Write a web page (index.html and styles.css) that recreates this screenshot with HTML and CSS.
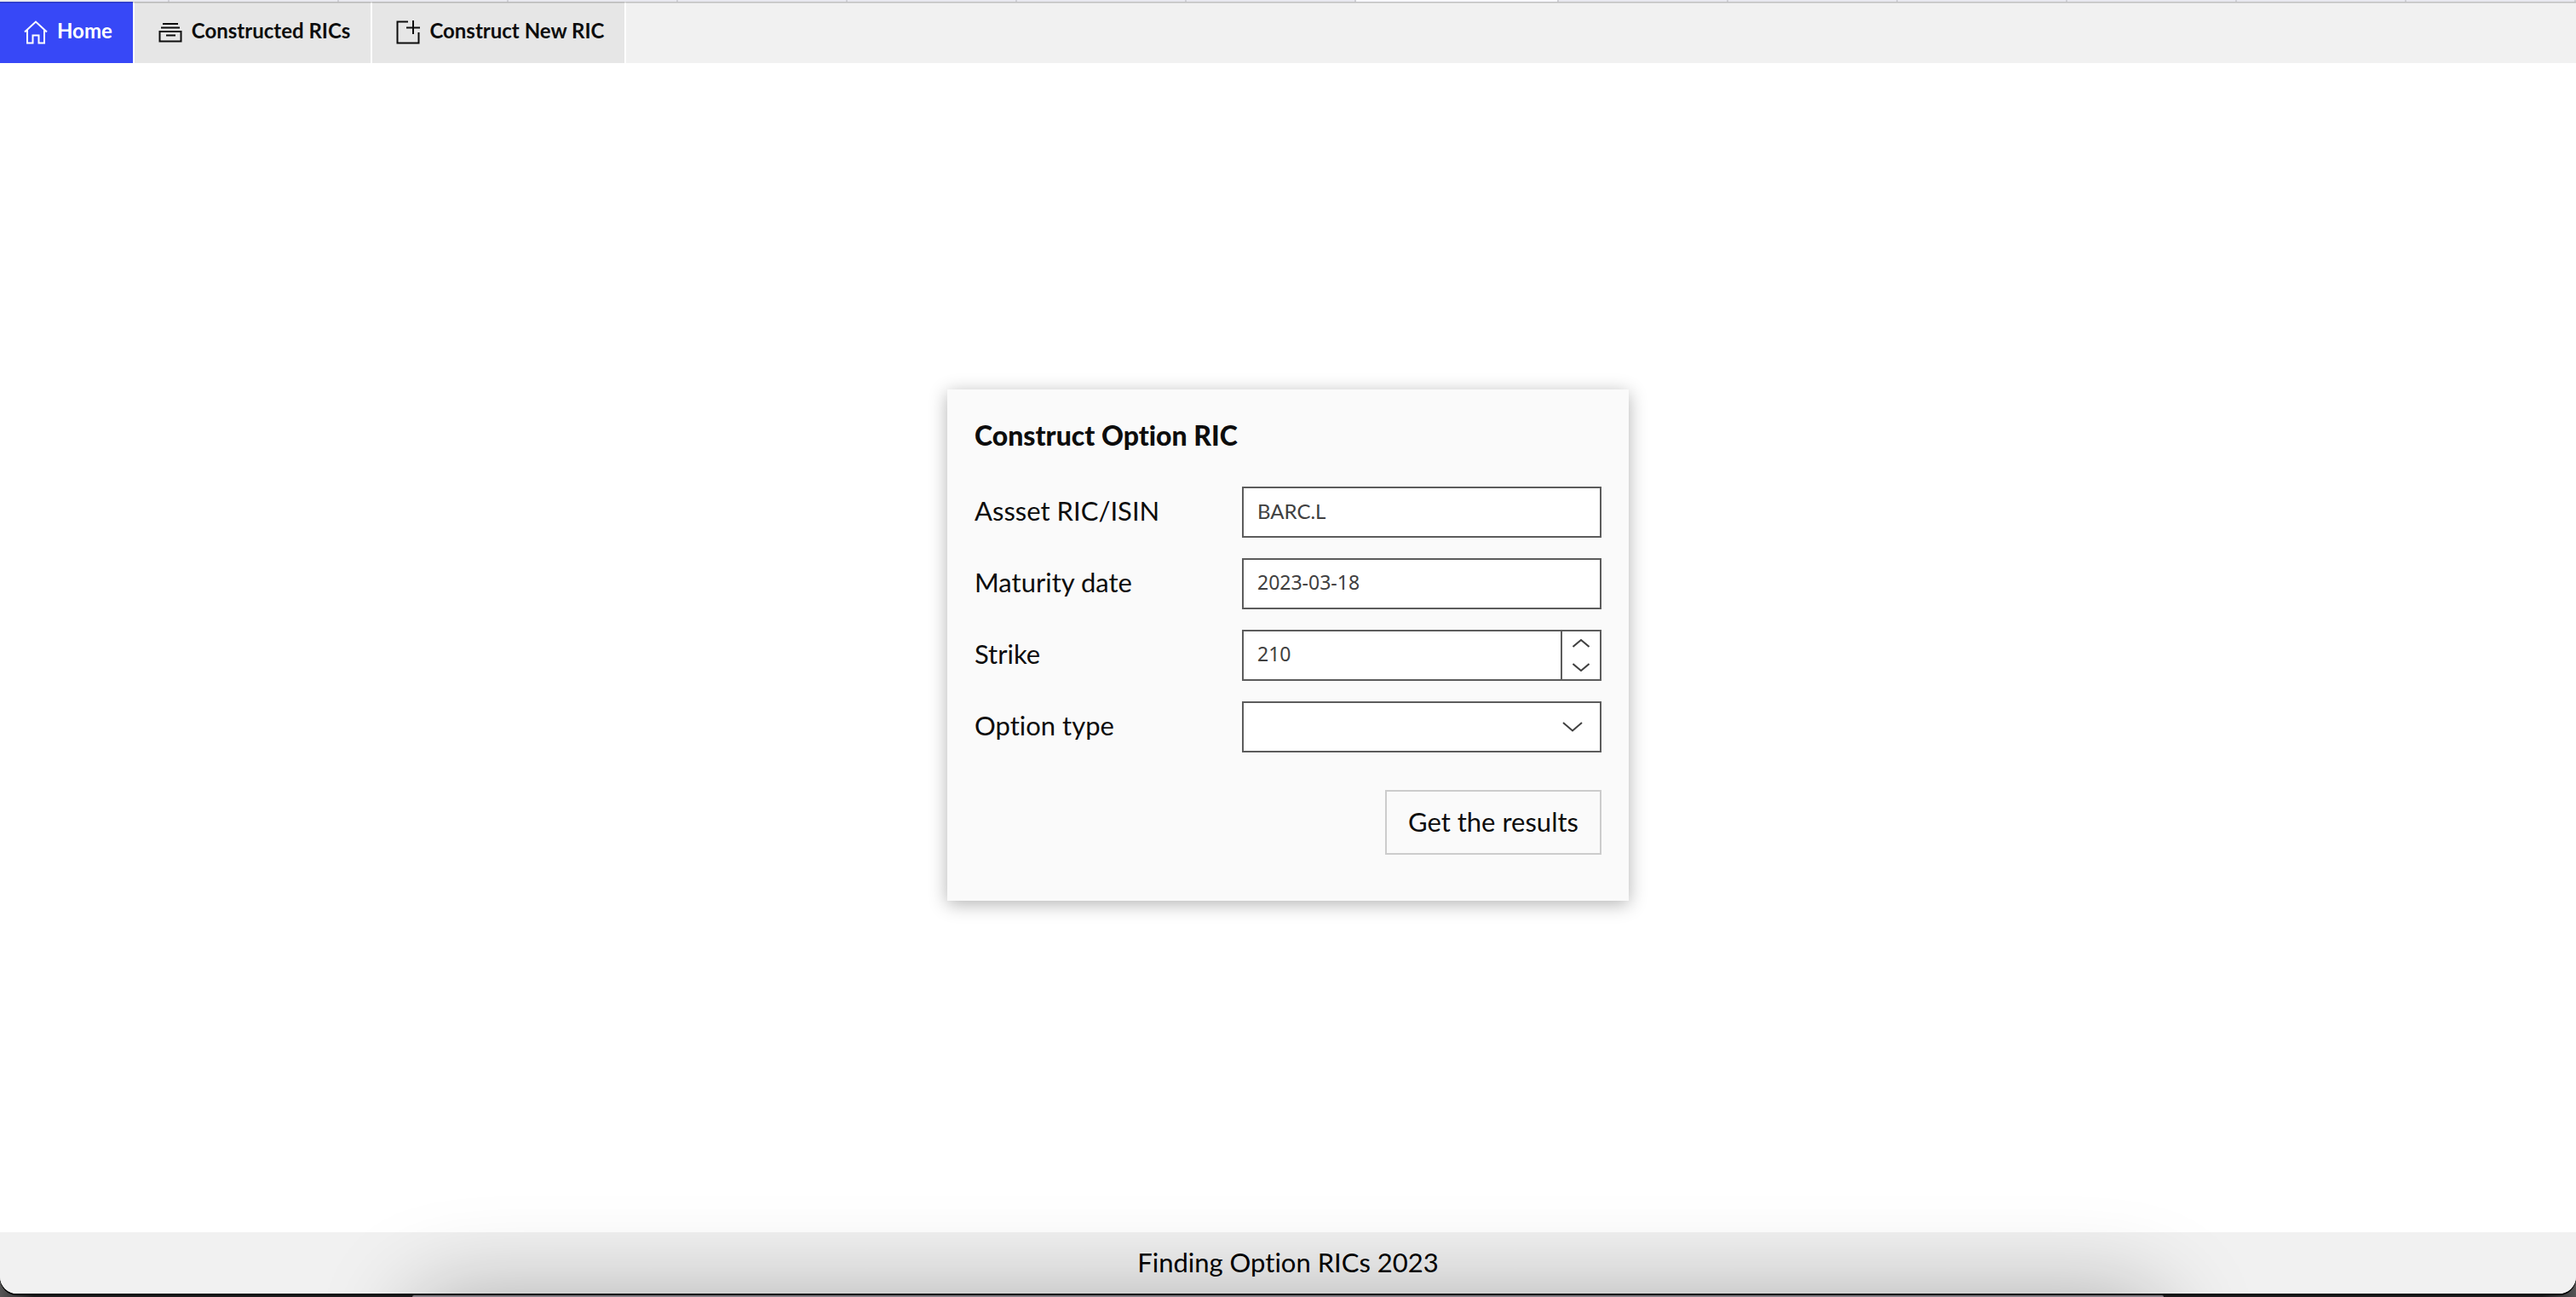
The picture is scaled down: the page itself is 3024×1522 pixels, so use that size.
FILE: index.html
```html
<!DOCTYPE html>
<html lang="en">
<head>
<meta charset="utf-8">
<title>Finding Option RICs</title>
<link rel="stylesheet" href="styles.css">
</head>
<body>
<div class="window">
  <div class="tabstrip" aria-hidden="true">
    <i></i><i></i><i></i><i></i><i></i><i></i><i></i><i></i><i class="current"></i><i></i><i></i><i></i><i></i><i></i><i></i>
  </div>
  <nav class="nav">
    <a class="tab tab-active" href="#home">
      <svg class="icon" viewBox="0 0 28 28" aria-hidden="true"><path d="M1 13.500L14 1.500l13 12M4 11v15.500h6.500v-9h7v9H24V11"/></svg>
      <span>Home</span>
    </a>
    <a class="tab" href="#constructed">
      <svg class="icon" viewBox="0 0 28 28" aria-hidden="true"><path d="M5 4h18M3 8.500h22M1.500 13h25v11.500h-25zM9 17.500h11"/></svg>
      <span>Constructed RICs</span>
    </a>
    <a class="tab" href="#new">
      <svg class="icon" viewBox="0 0 28 28" aria-hidden="true"><path d="M14 1.500H1.500v25h25V14M12 8.500h16M20 0v16"/></svg>
      <span>Construct New RIC</span>
    </a>
  </nav>
  <main class="main">
    <form class="card">
      <h1 class="title">Construct Option RIC</h1>
      <div class="row">
        <label for="asset">Assset RIC/ISIN</label>
        <input class="field" id="asset" type="text" value="BARC.L">
      </div>
      <div class="row">
        <label for="maturity">Maturity date</label>
        <input class="field numeric" id="maturity" type="text" value="2023-03-18">
      </div>
      <div class="row">
        <label for="strike">Strike</label>
        <div class="stepper">
          <input class="stepper-input numeric" id="strike" type="text" inputmode="numeric" value="210">
          <div class="stepper-buttons">
            <button class="step" type="button" aria-label="Increase"><svg viewBox="0 0 20 10" aria-hidden="true"><path d="M0.500 9L10 1l9.500 8"/></svg></button>
            <button class="step" type="button" aria-label="Decrease"><svg viewBox="0 0 20 10" aria-hidden="true"><path d="M0.500 1L10 9l9.500-8"/></svg></button>
          </div>
        </div>
      </div>
      <div class="row">
        <label for="type">Option type</label>
        <div class="select">
          <select class="field" id="type"><option></option></select>
          <svg class="chevron" viewBox="0 0 24 12" aria-hidden="true"><path d="M1 1l11 9.500L23 1"/></svg>
        </div>
      </div>
      <button class="submit" type="button">Get the results</button>
    </form>
  </main>
  <footer class="footer">Finding Option RICs 2023</footer>
</div>
<div class="dock" aria-hidden="true"></div>
</body>
</html>
```
FILE: styles.css
```css
* { box-sizing: border-box; }
html { height: 100%; }
body {
  display: flex;
  flex-direction: column;
  min-height: 100%;
  margin: 0;
  background: linear-gradient(90deg, #555, #1d1b1d 40px, #1d1b1d calc(100% - 40px), #555);
  color: #0d0d0d;
  font-family: Lato, "Liberation Sans", sans-serif;
  font-size: 31px;
  line-height: 40px;
  font-variant-ligatures: none;
}
.window {
  position: relative;
  display: flex;
  flex: 1;
  flex-direction: column;
  background: #fff;
  border-radius: 0 0 20px 20px;
  box-shadow: 0 2px 0 #000;
  overflow: hidden;
}
/* shadow cast upwards by the dock */
.window::after {
  content: "";
  position: absolute;
  top: 100%;
  left: 16%;
  right: 16%;
  height: 160px;
  border-radius: 40px;
  box-shadow: 0 0 110px rgba(0, 0, 0, 0.28);
  pointer-events: none;
}
.dock {
  height: 2px;
  margin: 2px 16% 0;
  background: #857f86;
  border-radius: 12px 12px 0 0;
}
.tabstrip { display: flex; height: 2px; background: #e8e8ef; }
.tabstrip i { flex: 10; border-right: 2px solid #d0d0d6; }
.tabstrip .current { flex: 12; background: #f8f8ff; }
.nav {
  position: relative;
  display: flex;
  height: 72px;
  background: #f1f1f1;
}
.nav::before {
  content: "";
  position: absolute;
  top: 0;
  left: 0;
  right: 0;
  height: 1px;
  background: rgba(0, 0, 0, 0.2);
  box-shadow: 0 1px 0 rgba(0, 0, 0, 0.1);
}
.tab {
  display: flex;
  align-items: center;
  gap: 11px;
  padding: 0 24px 0 28px;
  border-right: 2px solid #fff;
  background: #e6e6e6;
  color: #0d0d0d;
  font-size: 24px;
  font-weight: 700;
  line-height: 32px;
  text-decoration: none;
}
.tab span { padding-bottom: 4px; }
.tab-active { background: #3748f7; color: #fff; }
.icon { width: 28px; height: 28px; fill: none; stroke: currentColor; stroke-width: 2; }
.main {
  flex: 1;
  display: flex;
  align-items: center;
  justify-content: center;
  padding-bottom: 6px;
}
.card {
  display: flex;
  flex-direction: column;
  gap: 24px;
  width: 800px;
  padding: 34px 32px 54px;
  background: #fafafa;
  box-shadow: 0 4px 20px rgba(0, 0, 0, 0.3);
}
.title { margin: 0 0 16px; font-size: 32px; font-weight: 900; line-height: 40px; }
.row { display: flex; align-items: center; justify-content: space-between; height: 60px; }
.row label { padding-bottom: 4px; }
.field, .stepper {
  width: 422px;
  height: 60px;
  border: 2px solid #5c5c5c;
  border-radius: 0;
  background: #fff;
}
.field, .stepper-input {
  padding: 0 16px 4px;
  color: #404040;
  font-family: inherit;
  font-size: 24px;
}
.numeric { font-family: "Noto Sans", sans-serif; font-size: 23px; }
.stepper { display: flex; }
.stepper-input { flex: 1; min-width: 0; border: 0; background: none; }
.stepper-buttons { display: flex; flex-direction: column; width: 46px; border-left: 2px solid #5c5c5c; }
.step { flex: 1; display: flex; align-items: center; justify-content: center; padding: 0; border: 0; background: none; }
.step svg { width: 20px; height: 10px; }
.step path, .chevron path { fill: none; stroke: #404040; stroke-width: 2; }
.select { position: relative; }
.select .field { display: block; appearance: none; }
.chevron { position: absolute; right: 22px; top: 24px; width: 24px; height: 12px; pointer-events: none; }
.submit {
  align-self: flex-end;
  height: 76px;
  margin-top: 20px;
  padding: 0 25px 3px;
  border: 2px solid #ccc;
  background: #fafafa;
  color: inherit;
  font: inherit;
}
.footer {
  display: flex;
  align-items: center;
  justify-content: center;
  height: 72px;
  padding-bottom: 3px;
  background: #f1f1f1;
  color: #000;
}
```
